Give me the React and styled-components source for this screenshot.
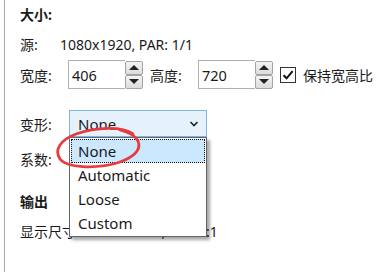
import React from 'react';
import styled, { createGlobalStyle } from 'styled-components';

const GlobalStyle = createGlobalStyle`
  html, body {
    margin: 0;
    padding: 0;
    background: #fff;
  }
  body {
    font-family: "Noto Sans", "Noto Sans CJK SC", sans-serif;
    font-size: 14px;
    color: #1a1a1a;
  }
`;

const Page = styled.div`
  width: 390px;
  height: 272px;
  overflow: hidden;
  position: relative;
  background: #fff;
`;

const Panel = styled.div`
  margin-left: 4px;
  height: 272px;
  border-left: 1px solid #a8a8a8;
  padding-left: 15px;
  box-sizing: border-box;
`;

const Row = styled.div`
  display: flex;
  align-items: center;
  height: ${p => p.$h}px;
  margin-top: ${p => p.$mt || 0}px;
  position: relative;
`;

const Heading = styled.span`
  font-weight: bold;
`;

const Label = styled.span`
  width: ${p => p.$w}px;
  flex-shrink: 0;
  white-space: nowrap;
`;

const Input = styled.div`
  width: 53px;
  height: 27px;
  border: 1px solid #b0b0b0;
  border-right: none;
  background: #fff;
  display: flex;
  align-items: center;
  padding-left: 3px;
  box-sizing: content-box;
  font-size: 14.5px;
`;

const Spinner = styled.div`
  width: 18px;
  height: 28px;
  display: flex;
  flex-direction: column;
  margin-right: ${p => p.$mr}px;
`;

const SpinButton = styled.div`
  flex: 1;
  border: 1px solid #a4a4a4;
  border-radius: 2px;
  background: linear-gradient(#f4f4f4, #dcdcdc);
  display: flex;
  align-items: center;
  justify-content: center;
`;

const Arrow = styled.span`
  width: 0;
  height: 0;
  border-left: 5px solid transparent;
  border-right: 5px solid transparent;
  ${p => p.$up
    ? 'border-bottom: 5px solid #222;'
    : 'border-top: 5px solid #222;'}
`;

const CheckBox = styled.div`
  width: 14px;
  height: 14px;
  border: 1px solid #333;
  background: #fff;
  display: flex;
  align-items: center;
  justify-content: center;
  margin-left: 7px;
  margin-right: 7px;
`;

const SelectWrap = styled.div`
  position: relative;
`;

const Select = styled.div`
  width: 121px;
  height: 25px;
  border: 1px solid #7eb4ea;
  background: #e5f1fb;
  display: flex;
  align-items: center;
  justify-content: space-between;
  padding: 0 7px 0 8px;
  font-size: 15px;
`;

const DropList = styled.div`
  position: absolute;
  top: 27px;
  left: 0;
  width: 136px;
  border: 1px solid #646464;
  background: #fff;
  padding: 1px 0;
  box-shadow: 3px 3px 3px rgba(0, 0, 0, 0.35);
  z-index: 5;
`;

const Option = styled.div`
  height: 24px;
  display: flex;
  align-items: center;
  padding-left: 6px;
  margin: 0 1px;
  font-size: 15px;
  box-sizing: border-box;
  background: ${p => (p.$active ? '#cce8ff' : 'transparent')};
  border: 1px dotted ${p => (p.$active ? '#111' : 'transparent')};
`;

const Mark = styled.svg`
  position: absolute;
  left: 0;
  top: 0;
  pointer-events: none;
  z-index: 6;
`;

function Spin({ mr }) {
  return (
    <Spinner $mr={mr}>
      <SpinButton><Arrow $up /></SpinButton>
      <SpinButton><Arrow /></SpinButton>
    </Spinner>
  );
}

export default function App() {
  const options = ['None', 'Automatic', 'Loose', 'Custom'];
  return (
    <Page>
      <GlobalStyle />
      <Panel>
        <Row $h={28}><Heading>大小:</Heading></Row>
        <Row $h={32}>
          <Label $w={40}>源:</Label>
          <span>1080x1920, PAR: 1/1</span>
        </Row>
        <Row $h={29}>
          <Label $w={48}>宽度:</Label>
          <Input>406</Input>
          <Spin mr={7} />
          <Label $w={48}>高度:</Label>
          <Input>720</Input>
          <Spin mr={0} />
          <CheckBox>
            <svg width="12" height="12" viewBox="0 0 12 12">
              <path d="M1.5 6.2 L4.6 9.3 L10.6 2.2" fill="none" stroke="#111" strokeWidth="2" />
            </svg>
          </CheckBox>
          <span>保持宽高比</span>
        </Row>
        <Row $h={27} $mt={21}>
          <Label $w={49}>变形:</Label>
          <SelectWrap>
            <Select>
              <span>None</span>
              <svg width="10" height="8" viewBox="0 0 10 8">
                <path d="M1.5 2 L5 5.5 L8.5 2" fill="none" stroke="#222" strokeWidth="1.6" />
              </svg>
            </Select>
            <DropList>
              {options.map((o, i) => (
                <Option key={o} $active={i === 0}>{o}</Option>
              ))}
            </DropList>
          </SelectWrap>
        </Row>
        <Row $h={44}><Label $w={48}>系数:</Label></Row>
        <Row $h={40}><Heading>输出</Heading></Row>
        <Row $h={20}>
          <Label $w={70}>显示尺寸:</Label>
          <span>1080x1920, PAR 1:1</span>
        </Row>
      </Panel>
      <Mark width="390" height="272">
        <path
          d="M133 134 C122 126 96 127 76 134 C60 140 54 150 60 159 C67 168 95 169 117 163 C133 158 142 150 138 141 C135 135 128 132 120 130"
          fill="none"
          stroke="#e63b40"
          strokeWidth="2.8"
          strokeLinecap="round"
        />
      </Mark>
    </Page>
  );
}
